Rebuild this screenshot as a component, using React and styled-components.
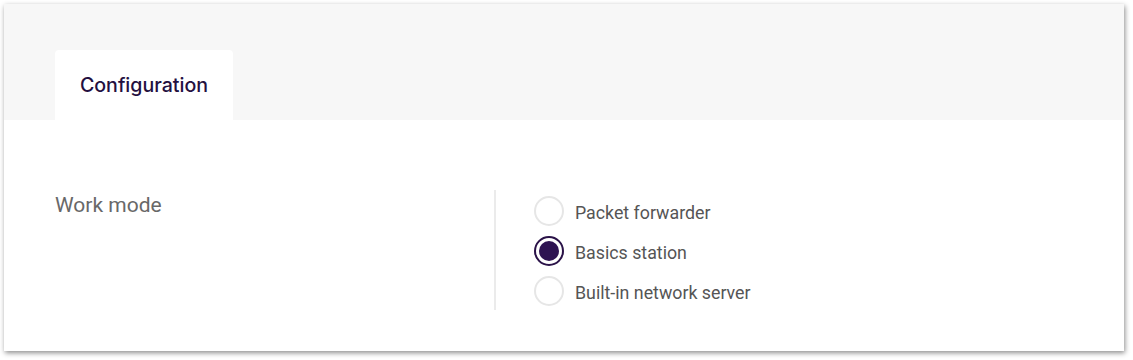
import React, { useState } from 'react';
import styled, { createGlobalStyle } from 'styled-components';

const Global = createGlobalStyle`
  body {
    margin: 0;
    background: #fff;
    font-family: Roboto, "Liberation Sans", sans-serif;
  }
`;

const Page = styled.div`
  padding: 4px 9px 9px 4px;
`;

const Card = styled.section`
  background: #fff;
  box-shadow: 1px 2px 5px rgba(0, 0, 0, 0.45);
  height: 347px;
  display: flex;
  flex-direction: column;
`;

const TabBar = styled.div`
  background: #f7f7f7;
  height: 116px;
  padding: 46px 0 0 51px;
  box-sizing: border-box;
  display: flex;
  align-items: flex-end;
`;

const Tab = styled.button`
  border: none;
  background: ${props => (props.active ? '#fff' : 'transparent')};
  border-radius: 4px 4px 0 0;
  width: 178px;
  height: 70px;
  padding: 0 0 1px;
  font-family: Inter, Roboto, sans-serif;
  font-size: 19.6px;
  font-weight: 500;
  color: #24103f;
  cursor: pointer;
`;

const Body = styled.div`
  display: grid;
  grid-template-columns: 439px 2px 1fr;
  padding: 70px 0 0 51px;
`;

const Label = styled.div`
  font-size: 21px;
  color: #686868;
  padding-top: 3px;
  line-height: 24px;
`;

const Divider = styled.div`
  background: #ebebeb;
  height: 120px;
`;

const Options = styled.div`
  display: flex;
  flex-direction: column;
  gap: 10px;
  padding: 6px 0 0 38px;
`;

const Option = styled.label`
  display: flex;
  align-items: center;
  gap: 11px;
  font-size: 17.8px;
  color: #555;
  cursor: pointer;
  height: 30px;
  line-height: 30px;
`;

const Circle = styled.span`
  width: 30px;
  height: 30px;
  flex: none;
  box-sizing: border-box;
  border-radius: 50%;
  border: 2px solid ${props => (props.checked ? '#2a1248' : '#e6e6e6')};
  display: flex;
  align-items: center;
  justify-content: center;
  background: #fff;

  &::after {
    content: '';
    width: 20px;
    height: 20px;
    border-radius: 50%;
    background: ${props => (props.checked ? '#2e1352' : 'transparent')};
  }
`;

const Text = styled.span`
  padding-top: 3px;
`;

const modes = ['Packet forwarder', 'Basics station', 'Built-in network server'];

export default function App() {
  const [mode, setMode] = useState('Basics station');

  return (
    <Page>
      <Global />
      <Card>
        <TabBar>
          <Tab active>Configuration</Tab>
        </TabBar>
        <Body>
          <Label>Work mode</Label>
          <Divider />
          <Options>
            {modes.map(m => (
              <Option key={m} onClick={() => setMode(m)}>
                <Circle checked={mode === m} />
                <Text>{m}</Text>
              </Option>
            ))}
          </Options>
        </Body>
      </Card>
    </Page>
  );
}
